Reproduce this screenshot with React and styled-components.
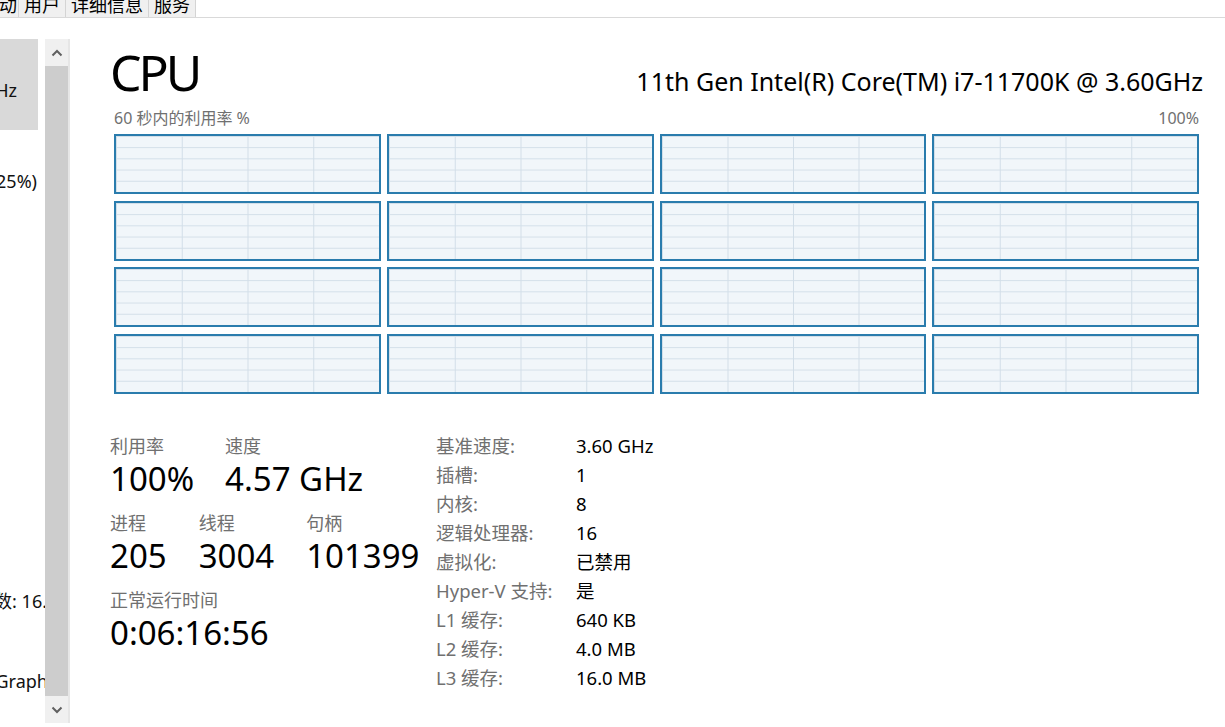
import React from "react";
import styled, { createGlobalStyle } from "styled-components";

const UI = `"Noto Sans", "Noto Sans CJK SC", sans-serif`;

const Global = createGlobalStyle`
  html, body { margin: 0; padding: 0; background: #ffffff; }
  body { width: 1225px; height: 727px; overflow: hidden; font-family: ${UI}; }
  * { box-sizing: border-box; }
`;

const Window = styled.div`
  width: 1225px;
  height: 727px;
  display: flex;
  flex-direction: column;
  background: #fff;
  overflow: hidden;
`;

const TabBar = styled.div`
  height: 18px;
  display: flex;
  align-items: flex-end;
  border-bottom: 1px solid #d9d9d9;
  overflow: hidden;
  flex: none;
`;

const Tab = styled.div`
  height: 17px;
  display: flex;
  align-items: flex-end;
  justify-content: ${(p) => (p.$clip ? "flex-end" : "center")};
  padding: 0 ${(p) => (p.$clip ? 1 : 5)}px 2px;
  width: ${(p) => (p.$w ? `${p.$w}px` : "auto")};
  overflow: hidden;
  white-space: nowrap;
  background: #f0f0f0;
  border-right: 1px solid #d4d4d4;
  font-size: 18px;
  line-height: 20px;
  color: #000;
  flex: none;
`;

const Body = styled.div`
  flex: 1;
  display: flex;
  min-height: 0;
`;

const Sidebar = styled.div`
  width: 45px;
  flex: none;
  padding-top: 21px;
  overflow: hidden;
  display: flex;
  flex-direction: column;
`;

const SideItem = styled.div`
  height: ${(p) => p.$h}px;
  width: ${(p) => (p.$selected ? 38 : 45)}px;
  flex: none;
  padding-top: ${(p) => p.$pad}px;
  background: ${(p) => (p.$selected ? "#d9d9d9" : "transparent")};
  overflow: ${(p) => (p.$selected ? "hidden" : "visible")};
`;

const SideLine = styled.div`
  width: ${(p) => p.$w}px;
  height: 24px;
  display: flex;
  justify-content: flex-end;
  white-space: nowrap;
  font-size: 18px;
  line-height: 24px;
  color: #111;
`;

const Scrollbar = styled.div`
  width: 25px;
  flex: none;
  margin-top: 21px;
  height: 684px;
  display: flex;
  flex-direction: column;
  background: #f0f0f0;
  border-right: 2px solid #e6e6e6;
`;

const ScrollButton = styled.div`
  height: 27px;
  flex: none;
  display: flex;
  align-items: center;
  justify-content: center;
  background: #f0f0f0;
`;

const ScrollThumb = styled.div`
  flex: 1;
  background: #cdcdcd;
`;

const Main = styled.div`
  flex: 1;
  min-width: 0;
  padding: 22px 22px 0 40px;
  display: flex;
  flex-direction: column;
`;

const Header = styled.div`
  display: flex;
  justify-content: space-between;
  align-items: baseline;
  height: 64px;
`;

const Title = styled.div`
  font-size: 50px;
  line-height: 64px;
  color: #000;
  letter-spacing: -3px;
`;

const Model = styled.div`
  font-size: 25px;
  line-height: 30px;
  color: #000;
`;

const GraphSection = styled.div`
  margin: 4px 4px 0 4px;
  display: flex;
  flex-direction: column;
`;

const Caption = styled.div`
  display: flex;
  justify-content: space-between;
  font-size: 16px;
  line-height: 20px;
  color: #707070;
  margin-bottom: 6px;
`;

const GraphGrid = styled.div`
  display: grid;
  grid-template-columns: repeat(4, 1fr);
  grid-template-rows: repeat(4, 60px);
  column-gap: 6px;
  row-gap: 6.67px;
`;

const Cell = styled.div`
  border: 2px solid #2a7cad;
  background-color: #f1f6fa;
  background-image: linear-gradient(to right, #d2dee8 1px, transparent 1px),
    linear-gradient(to bottom, #d2dee8 1px, transparent 1px);
  background-size: 25% 100%, 100% 20%;
`;

const Stats = styled.div`
  margin-top: 37px;
  display: grid;
  grid-template-columns: 326px auto;
`;

const LeftStats = styled.div`
  padding-top: 4px;
  display: flex;
  flex-direction: column;
  gap: 13px;
`;

const StatRow = styled.div`
  display: flex;
  gap: ${(p) => p.$gap}px;
`;

const Stat = styled.div`
  display: flex;
  flex-direction: column;
`;

const StatLabel = styled.div`
  font-size: 18px;
  line-height: 22px;
  color: #707070;
`;

const StatValue = styled.div`
  font-size: 33px;
  line-height: 40px;
  color: #000;
  margin-top: 2px;
`;

const InfoTable = styled.div`
  display: grid;
  grid-template-columns: 140px auto;
  grid-auto-rows: 29px;
  align-items: center;
  font-size: 18.5px;
`;

const InfoLabel = styled.div`
  color: #707070;
  white-space: nowrap;
`;

const InfoValue = styled.div`
  color: #000;
  white-space: nowrap;
`;

const Chevron = ({ up }) => (
  <svg width="12" height="8" viewBox="0 0 12 8">
    <path
      d={up ? "M1.5 6.5 L6 2 L10.5 6.5" : "M1.5 1.5 L6 6 L10.5 1.5"}
      fill="none"
      stroke="#606060"
      strokeWidth="2"
    />
  </svg>
);

const info = [
  ["基准速度:", "3.60 GHz"],
  ["插槽:", "1"],
  ["内核:", "8"],
  ["逻辑处理器:", "16"],
  ["虚拟化:", "已禁用"],
  ["Hyper-V 支持:", "是"],
  ["L1 缓存:", "640 KB"],
  ["L2 缓存:", "4.0 MB"],
  ["L3 缓存:", "16.0 MB"],
];

export default function App() {
  return (
    <>
      <Global />
      <Window>
        <TabBar>
          <Tab $clip $w={19}>启动</Tab>
          <Tab>用户</Tab>
          <Tab>详细信息</Tab>
          <Tab>服务</Tab>
        </TabBar>
        <Body>
          <Sidebar>
            <SideItem $selected $h={91} $pad={39}>
              <SideLine $w={17}>100% 4.57 GHz</SideLine>
            </SideItem>
            <SideItem $h={91} $pad={39}>
              <SideLine $w={37}>7.9/31.8 GB (25%)</SideLine>
            </SideItem>
            <SideItem $h={400} $pad={368}>
              <SideLine $w={47}>内存数: 16.</SideLine>
            </SideItem>
            <SideItem $h={80} $pad={48}>
              <SideLine $w={48}>UHD Graph</SideLine>
            </SideItem>
          </Sidebar>
          <Scrollbar>
            <ScrollButton>
              <Chevron up />
            </ScrollButton>
            <ScrollThumb />
            <ScrollButton>
              <Chevron />
            </ScrollButton>
          </Scrollbar>
          <Main>
            <Header>
              <Title>CPU</Title>
              <Model>11th Gen Intel(R) Core(TM) i7-11700K @ 3.60GHz</Model>
            </Header>
            <GraphSection>
              <Caption>
                <span>60 秒内的利用率 %</span>
                <span>100%</span>
              </Caption>
              <GraphGrid>
                {Array.from({ length: 16 }, (_, i) => (
                  <Cell key={i} />
                ))}
              </GraphGrid>
            </GraphSection>
            <Stats>
              <LeftStats>
                <StatRow $gap={31}>
                  <Stat>
                    <StatLabel>利用率</StatLabel>
                    <StatValue>100%</StatValue>
                  </Stat>
                  <Stat>
                    <StatLabel>速度</StatLabel>
                    <StatValue>4.57 GHz</StatValue>
                  </Stat>
                </StatRow>
                <StatRow $gap={32}>
                  <Stat>
                    <StatLabel>进程</StatLabel>
                    <StatValue>205</StatValue>
                  </Stat>
                  <Stat>
                    <StatLabel>线程</StatLabel>
                    <StatValue>3004</StatValue>
                  </Stat>
                  <Stat>
                    <StatLabel>句柄</StatLabel>
                    <StatValue>101399</StatValue>
                  </Stat>
                </StatRow>
                <StatRow $gap={0}>
                  <Stat>
                    <StatLabel>正常运行时间</StatLabel>
                    <StatValue>0:06:16:56</StatValue>
                  </Stat>
                </StatRow>
              </LeftStats>
              <InfoTable>
                {info.map(([k, v]) => (
                  <React.Fragment key={k}>
                    <InfoLabel>{k}</InfoLabel>
                    <InfoValue>{v}</InfoValue>
                  </React.Fragment>
                ))}
              </InfoTable>
            </Stats>
          </Main>
        </Body>
      </Window>
    </>
  );
}
